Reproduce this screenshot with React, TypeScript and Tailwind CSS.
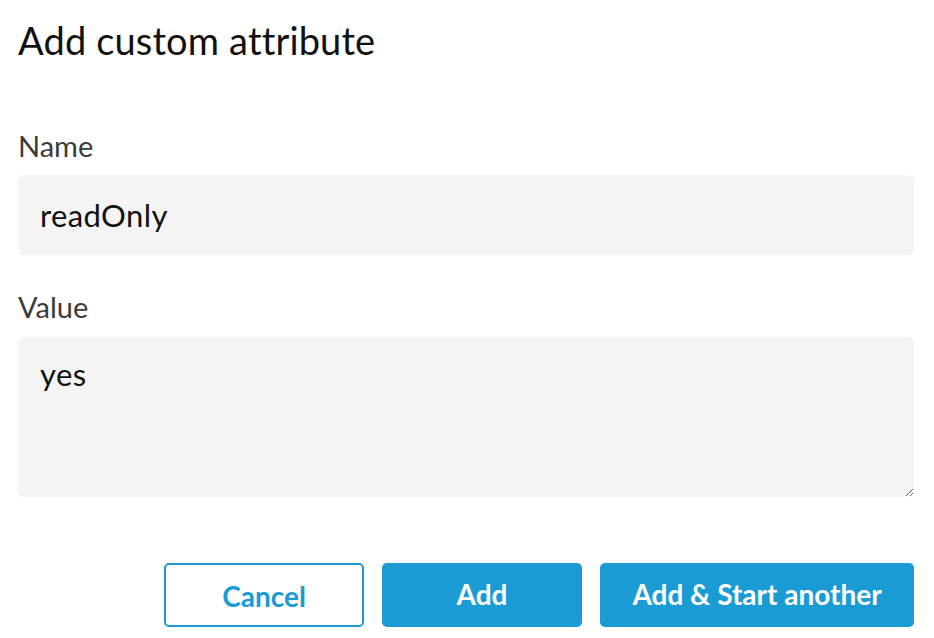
export default function App() {
  return (
    <div className="min-h-screen bg-white px-[18px] pt-[17px] font-['Lato',sans-serif] w-[932px]">
      <h1 className="text-[38px] leading-[46px] tracking-[0.15px] text-[#111111] font-normal">
        Add custom attribute
      </h1>

      <form className="flex flex-col" onSubmit={(e) => e.preventDefault()}>
        <label htmlFor="attr-name" className="mt-[65px] text-[29px] leading-[36px] text-[#3b3b3b]">
          Name
        </label>
        <input
          id="attr-name"
          type="text"
          defaultValue="readOnly"
          className="mt-[11px] h-[80px] w-full rounded-[6px] bg-[#f4f4f4] px-[22px] text-[31px] tracking-[0.4px] text-[#111111] outline-none"
        />

        <label htmlFor="attr-value" className="mt-[34px] text-[29px] leading-[36px] text-[#3b3b3b]">
          Value
        </label>
        <textarea
          id="attr-value"
          defaultValue="yes"
          className="mt-[12px] h-[160px] w-full rounded-[6px] bg-[#f4f4f4] px-[22px] pt-[15px] text-[31px] leading-[45px] tracking-[0.4px] text-[#111111] outline-none"
        />

        <div className="mt-[66px] flex justify-end gap-[18px]">
          <button
            type="button"
            className="h-[64px] w-[200px] rounded-[5px] border-2 border-[#1a9bd4] bg-white pt-[1px] text-[28px] font-bold text-[#1a9bd4]"
          >
            Cancel
          </button>
          <button
            type="submit"
            className="h-[64px] w-[200px] rounded-[5px] bg-[#1a9bd4] pb-[3px] text-[28px] font-bold text-white"
          >
            Add
          </button>
          <button
            type="button"
            className="h-[64px] w-[314px] rounded-[5px] bg-[#1a9bd4] pb-[3px] text-[28px] font-bold text-white"
          >
            Add &amp; Start another
          </button>
        </div>
      </form>
    </div>
  );
}
